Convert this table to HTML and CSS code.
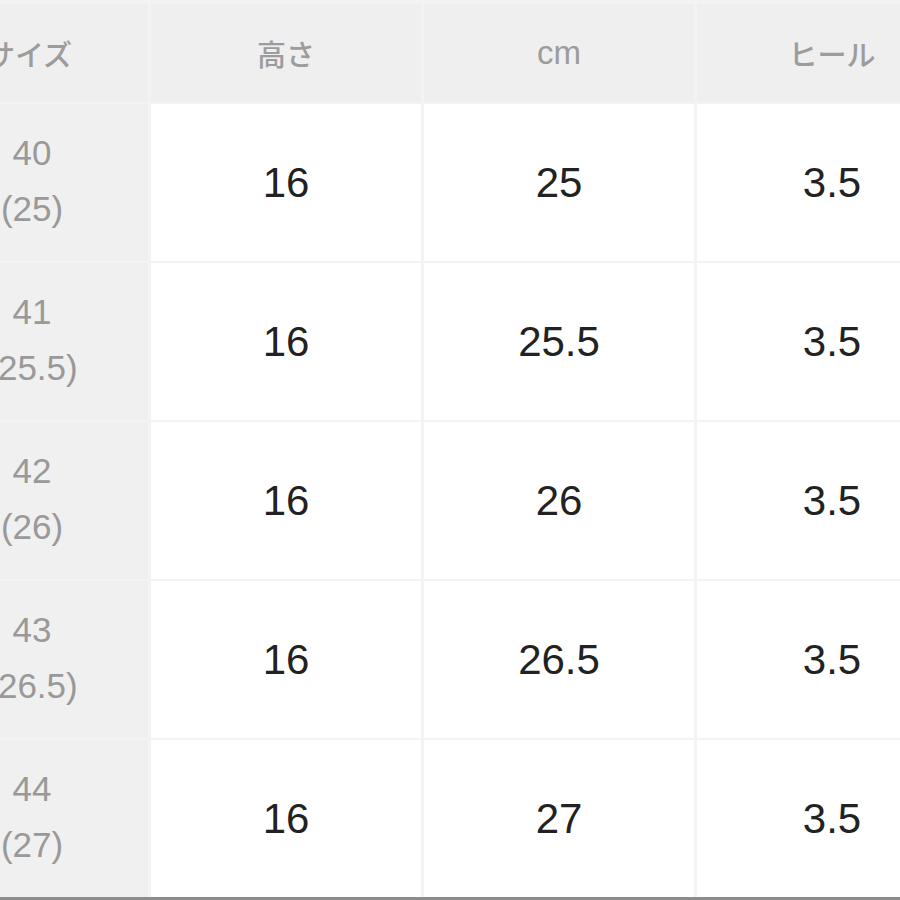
FILE: index.html
```html
<!DOCTYPE html>
<html lang="ja">
<head>
<meta charset="utf-8">
<title>サイズ表</title>
<link rel="stylesheet" href="styles.css">
</head>
<body>
<div class="page">
  <div class="sheet">
    <div class="cell head">サイズ</div>
    <div class="cell head">高さ</div>
    <div class="cell head latin">cm</div>
    <div class="cell head">ヒール</div>

    <div class="cell size"><span>40</span><span>(25)</span></div>
    <div class="cell val">16</div>
    <div class="cell val">25</div>
    <div class="cell val">3.5</div>

    <div class="cell size"><span>41</span><span>(25.5)</span></div>
    <div class="cell val">16</div>
    <div class="cell val">25.5</div>
    <div class="cell val">3.5</div>

    <div class="cell size"><span>42</span><span>(26)</span></div>
    <div class="cell val">16</div>
    <div class="cell val">26</div>
    <div class="cell val">3.5</div>

    <div class="cell size"><span>43</span><span>(26.5)</span></div>
    <div class="cell val">16</div>
    <div class="cell val">26.5</div>
    <div class="cell val">3.5</div>

    <div class="cell size"><span>44</span><span>(27)</span></div>
    <div class="cell val">16</div>
    <div class="cell val">27</div>
    <div class="cell val">3.5</div>
  </div>
</div>
</body>
</html>
```
FILE: styles.css
```css
html, body {
  margin: 0;
  padding: 0;
  background: #f4f4f4;
}
body {
  width: 900px;
  height: 900px;
  overflow: hidden;
  font-family: "Liberation Sans", "Noto Sans CJK JP", sans-serif;
}
.page {
  width: 900px;
  height: 900px;
  overflow: hidden;
  box-sizing: border-box;
  padding-top: 4px;
  border-bottom: 3px solid #8c8c8c;
  background: #f3f3f3;
}
.sheet {
  display: grid;
  grid-template-columns: 238px 270px 270px 270px;
  grid-template-rows: 98px repeat(5, 157px);
  column-gap: 3px;
  row-gap: 2px;
  margin-left: -90px;
  width: 1060px;
}
.cell {
  display: flex;
  align-items: center;
  justify-content: center;
  text-align: center;
}
.head {
  background: #efefef;
  color: #9c9c9c;
  font-size: 29px;
  font-family: "Noto Sans CJK JP", "Liberation Sans", sans-serif;
  font-weight: 500;
}
.head.latin {
  font-family: "Liberation Sans", sans-serif;
  font-size: 33px;
  font-weight: 400;
}
.size {
  background: #f0f0f0;
  color: #999999;
  font-size: 35px;
  flex-direction: column;
  line-height: 56px;
  padding-bottom: 4px;
  padding-left: 6px;
  box-sizing: border-box;
}
.val {
  background: #ffffff;
  color: #222222;
  font-size: 42px;
}
```
